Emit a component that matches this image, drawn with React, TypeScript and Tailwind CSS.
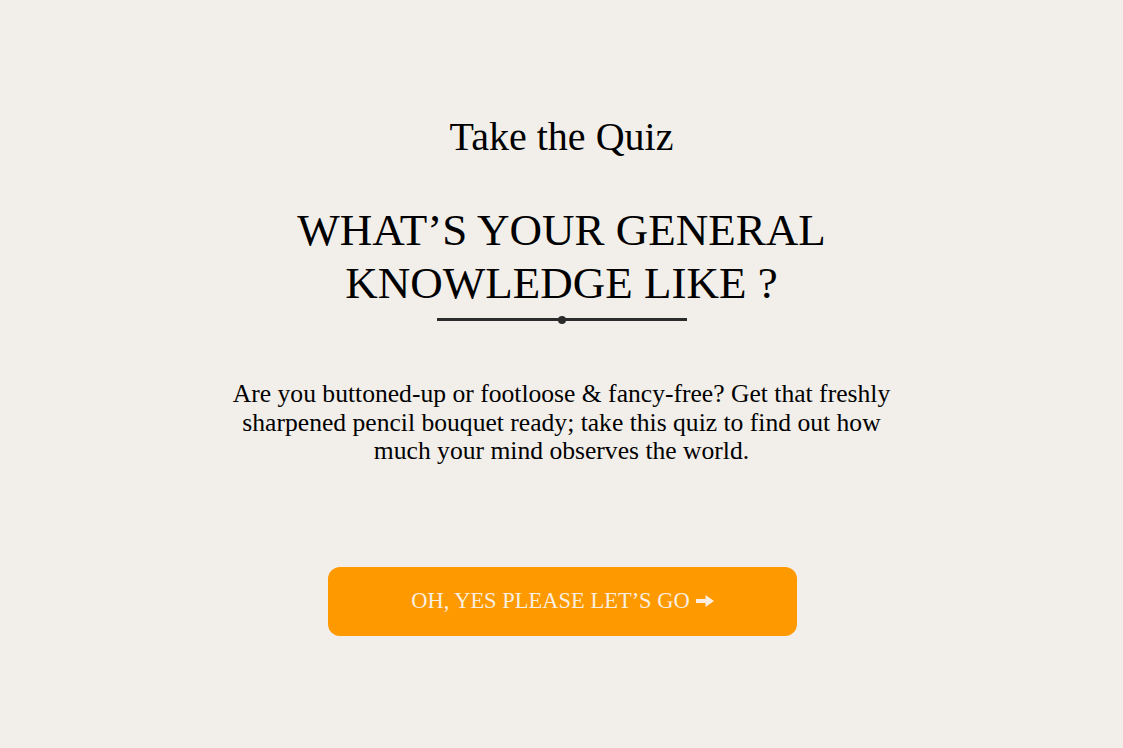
import React from 'react';

export default function App() {
  return (
    <div className="min-h-[748px] w-full bg-[#f2efea] font-['Liberation_Serif',serif] text-black">
      <div className="flex flex-col items-center pt-[114px]">
        <h2 className="text-[40px] leading-[46px]">Take the Quiz</h2>

        <h1 className="mt-[44px] text-center text-[45px] leading-[53px]">
          WHAT’S YOUR GENERAL
          <br />
          KNOWLEDGE LIKE ?
        </h1>

        {/* divider with dot */}
        <div className="relative mt-[8px] h-[3px] w-[250px] bg-[#2b2b2b]">
          <span className="absolute left-1/2 top-1/2 h-[8px] w-[8px] -translate-x-1/2 -translate-y-1/2 rounded-full bg-[#2b2b2b]" />
        </div>

        <p className="mt-[59px] max-w-[680px] text-center text-[25.6px] leading-[28.5px]">
          Are you buttoned-up or footloose &amp; fancy-free? Get that freshly sharpened pencil bouquet ready; take this quiz to find out how much your mind observes the world.
        </p>

        <button className="ml-[2px] mt-[101px] flex h-[69px] w-[469px] items-center justify-center gap-[6px] rounded-[12px] bg-[#ff9900] text-[22.5px] text-[#f9eedf]">
          OH, YES PLEASE LET’S GO
          <svg width="18" height="12" viewBox="0 0 18 12" fill="#f9eedf">
            <rect x="0" y="4" width="11" height="4" />
            <path d="M9.5 0 L18 6 L9.5 12 Z" />
          </svg>
        </button>
      </div>
    </div>
  );
}
